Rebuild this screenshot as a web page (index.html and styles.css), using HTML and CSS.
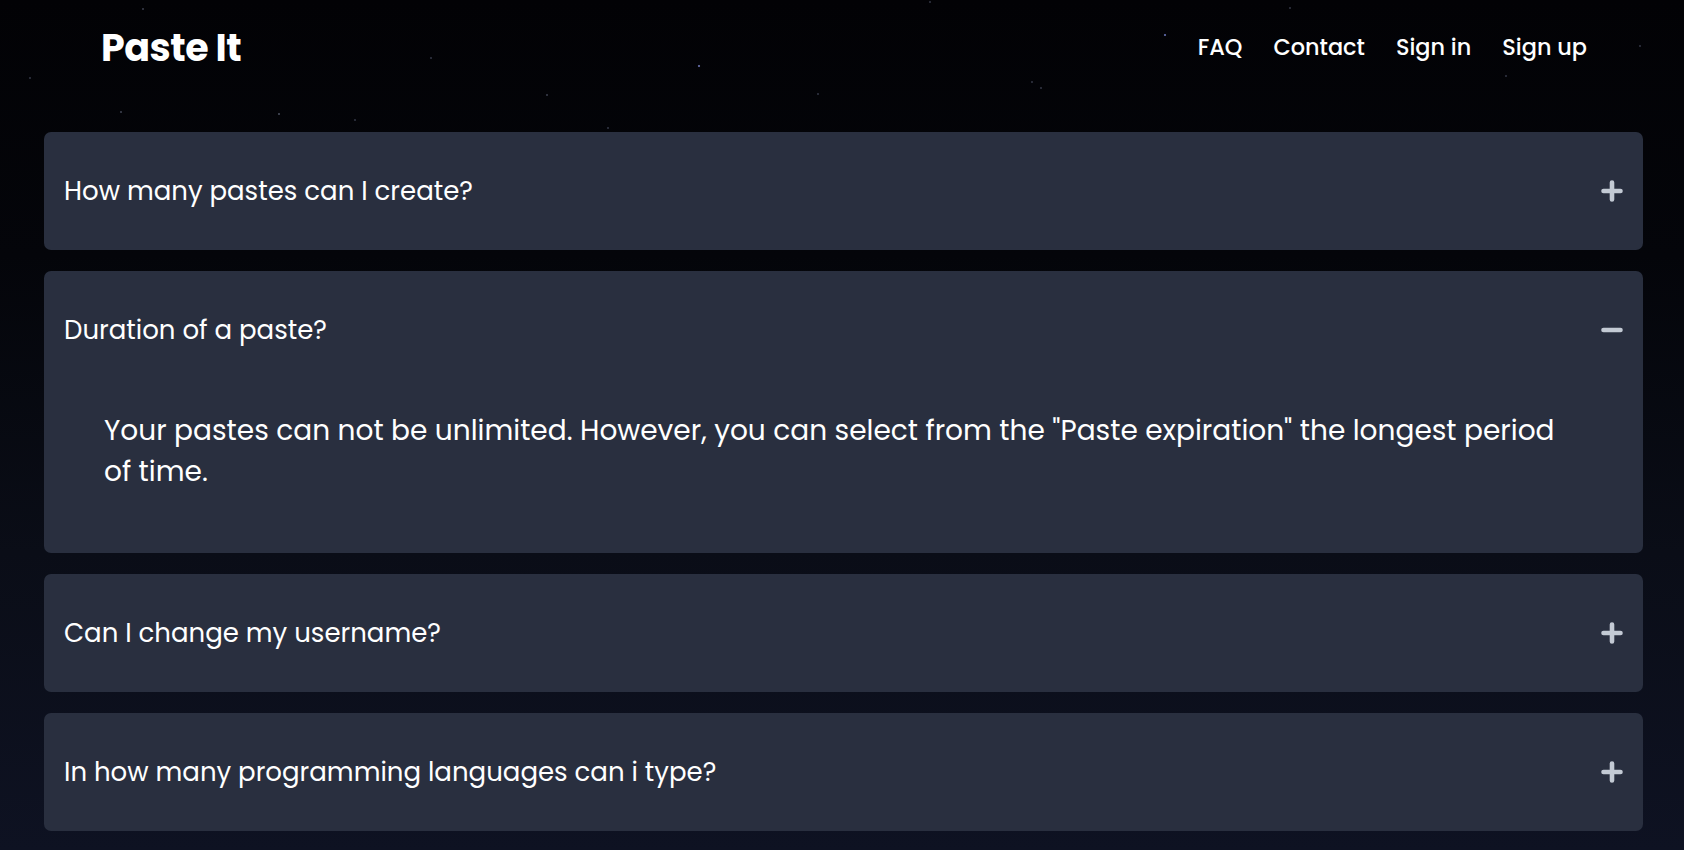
FILE: index.html
```html
<!DOCTYPE html>
<html lang="en">
<head>
<meta charset="utf-8">
<title>Paste It - FAQ</title>
<link rel="stylesheet" href="styles.css">
</head>
<body>
  <header class="topbar">
    <a class="logo" href="#">Paste It</a>
    <nav class="nav">
      <a href="#">FAQ</a>
      <a href="#">Contact</a>
      <a href="#">Sign in</a>
      <a href="#">Sign up</a>
    </nav>
  </header>
  <main class="faq">
    <section class="item">
      <div class="question">
        <span>How many pastes can I create?</span>
        <svg class="toggle" viewBox="0 0 24 24" width="24" height="24"><path d="M12 3.5v17M3.5 12h17" stroke="currentColor" stroke-width="4.6" stroke-linecap="round" fill="none"/></svg>
      </div>
    </section>
    <section class="item open">
      <div class="question">
        <span>Duration of a paste?</span>
        <svg class="toggle" viewBox="0 0 24 24" width="24" height="24"><path d="M3.5 12h17" stroke="currentColor" stroke-width="4.6" stroke-linecap="round" fill="none"/></svg>
      </div>
      <p class="answer">Your pastes can not be unlimited. However, you can select from the "Paste expiration" the longest period of time.</p>
    </section>
    <section class="item">
      <div class="question">
        <span>Can I change my username?</span>
        <svg class="toggle" viewBox="0 0 24 24" width="24" height="24"><path d="M12 3.5v17M3.5 12h17" stroke="currentColor" stroke-width="4.6" stroke-linecap="round" fill="none"/></svg>
      </div>
    </section>
    <section class="item">
      <div class="question">
        <span>In how many programming languages can i type?</span>
        <svg class="toggle" viewBox="0 0 24 24" width="24" height="24"><path d="M12 3.5v17M3.5 12h17" stroke="currentColor" stroke-width="4.6" stroke-linecap="round" fill="none"/></svg>
      </div>
    </section>
  </main>
</body>
</html>
```
FILE: styles.css
```css
* { box-sizing: border-box; }

html, body { height: 100%; }

body {
  margin: 0;
  min-height: 850px;
  font-family: "Poppins", "Inter", "Open Sans", sans-serif;
  color: #ffffff;
  background-color: #05060b;
  background-image:
    radial-gradient(1.6px 1.6px at 1165px 35px, #8fa0ff, transparent),
    radial-gradient(1.6px 1.6px at 699px 66px, #9aa6ff, transparent),
    radial-gradient(1.2px 1.2px at 279px 114px, #8890a8, transparent),
    radial-gradient(1.2px 1.2px at 121px 112px, #707890, transparent),
    radial-gradient(1.2px 1.2px at 143px 9px, #6a7088, transparent),
    radial-gradient(1.2px 1.2px at 547px 95px, #6a7088, transparent),
    radial-gradient(1.2px 1.2px at 431px 58px, #5a6078, transparent),
    radial-gradient(1.2px 1.2px at 30px 78px, #5a6078, transparent),
    radial-gradient(1.2px 1.2px at 1032px 82px, #5a6078, transparent),
    radial-gradient(1.2px 1.2px at 1041px 88px, #5a6078, transparent),
    radial-gradient(1.2px 1.2px at 818px 94px, #5a6078, transparent),
    radial-gradient(1.2px 1.2px at 1290px 8px, #5a6078, transparent),
    radial-gradient(1.2px 1.2px at 1506px 76px, #5a6078, transparent),
    radial-gradient(1.2px 1.2px at 1640px 46px, #5a6078, transparent),
    radial-gradient(1.2px 1.2px at 930px 2px, #5a6078, transparent),
    radial-gradient(1.2px 1.2px at 355px 120px, #5a6078, transparent),
    radial-gradient(1.2px 1.2px at 608px 128px, #5a6078, transparent),
    linear-gradient(180deg, #020205 0%, #04050a 30%, #0a0d17 65%, #0e1222 100%);
  background-repeat: no-repeat;
}

a { color: inherit; text-decoration: none; }

.topbar {
  display: flex;
  align-items: center;
  justify-content: space-between;
  height: 94px;
  padding: 0 97px 0 101px;
}

.logo {
  font-size: 38px;
  font-weight: 700;
  letter-spacing: -0.5px;
}

.nav {
  display: flex;
  gap: 31px;
  font-size: 22.4px;
  font-weight: 500;
}

.faq {
  display: flex;
  flex-direction: column;
  gap: 21px;
  padding: 38px 41px 0 44px;
}

.item {
  background: #292f3f;
  border-radius: 7px;
}

.question {
  display: flex;
  align-items: center;
  justify-content: space-between;
  height: 118px;
  padding: 0 19px 0 20px;
  font-size: 26px;
  font-weight: 400;
}

.toggle {
  color: #c3cad4;
  flex: none;
}

.answer {
  margin: 0;
  padding: 21px 60px 61px 60px;
  font-size: 28px;
  line-height: 41px;
}
```
